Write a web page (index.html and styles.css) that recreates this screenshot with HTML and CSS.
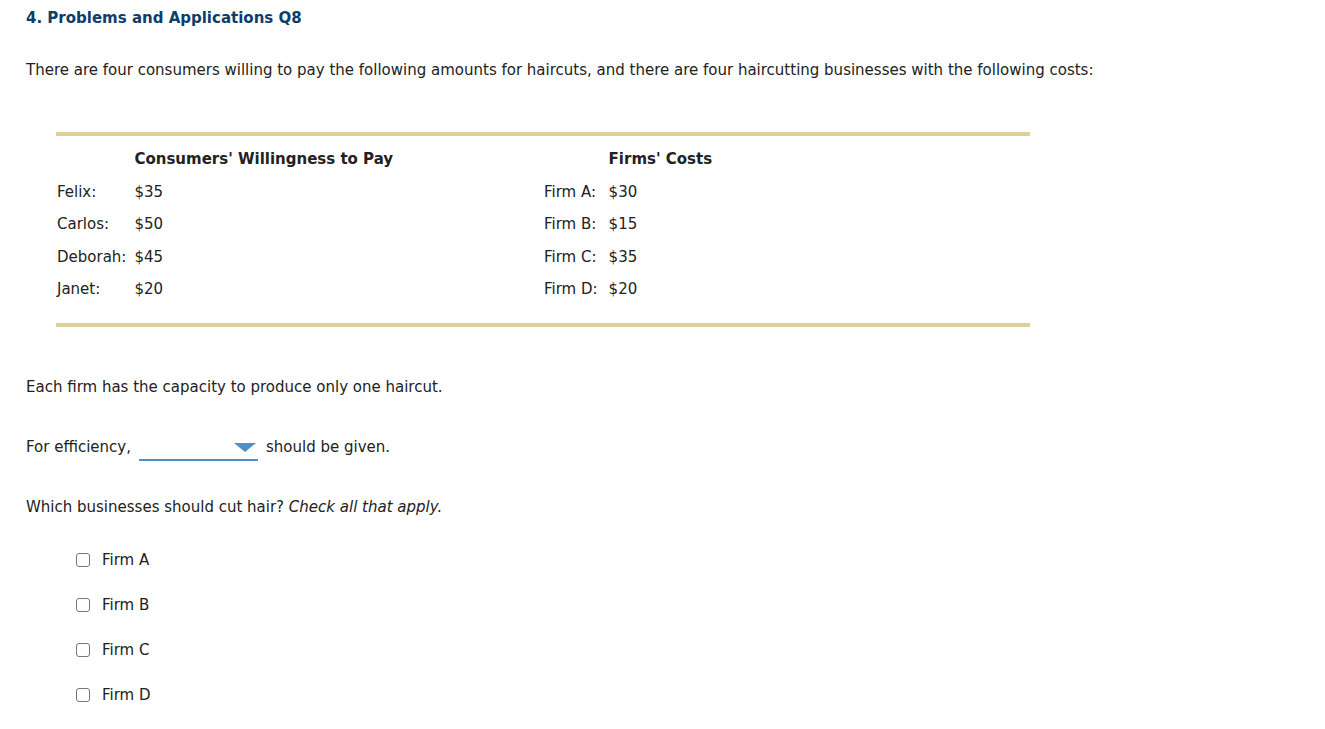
FILE: index.html
```html
<!DOCTYPE html>
<html lang="en">
  <head>
    <meta charset="UTF-8" />
    <title>Problems and Applications Q8</title>
    <link rel="stylesheet" href="styles.css">
  </head>
  <body>
    <div class="question">
      <h1>4. Problems and Applications Q8</h1>

      <p class="intro">
        There are four consumers willing to pay the following amounts for haircuts, and there are four haircutting businesses with the following costs:
      </p>

      <div class="data-table">
        <div class="half">
          <span></span><span class="head">Consumers' Willingness to Pay</span>
          <span>Felix:</span><span>$35</span>
          <span>Carlos:</span><span>$50</span>
          <span>Deborah:</span><span>$45</span>
          <span>Janet:</span><span>$20</span>
        </div>
        <div class="half">
          <span></span><span class="head">Firms' Costs</span>
          <span>Firm A:</span><span>$30</span>
          <span>Firm B:</span><span>$15</span>
          <span>Firm C:</span><span>$35</span>
          <span>Firm D:</span><span>$20</span>
        </div>
      </div>

      <p class="capacity">Each firm has the capacity to produce only one haircut.</p>

      <p class="efficiency">
        For efficiency,
        <span class="dropdown"><span class="arrow"></span></span>
        should be given.
      </p>

      <p class="which">Which businesses should cut hair? <em>Check all that apply.</em></p>

      <ul class="choices">
        <li><label><input type="checkbox" /> Firm A</label></li>
        <li><label><input type="checkbox" /> Firm B</label></li>
        <li><label><input type="checkbox" /> Firm C</label></li>
        <li><label><input type="checkbox" /> Firm D</label></li>
      </ul>
    </div>
  </body>
</html>
```

FILE: styles.css
```css
/* General Styles */
body {
  font-family: Verdana, "DejaVu Sans", sans-serif;
  font-size: 15px;
  color: #222;
  background: #fff;
  margin: 0;
  padding: 0;
}
.question {
  padding: 9px 26px;
}
h1 {
  font-size: 15px;
  font-weight: bold;
  color: #0c3d6b;
  margin: 0;
  line-height: 18px;
}
p {
  margin: 0;
  line-height: 18px;
}
.intro {
  margin-top: 34px;
}

/* Data table */
.data-table {
  display: grid;
  grid-template-columns: 1fr 1fr;
  width: 974px;
  margin: 53px 0 0 30px;
  border-top: 4px solid #dbcf9f;
  border-bottom: 4px solid #dbcf9f;
  padding: 14px 0 25px;
}
.half {
  display: grid;
  grid-template-columns: auto 1fr;
  column-gap: 8px;
  row-gap: 14.5px;
  align-content: start;
  line-height: 18px;
}
.half span:nth-child(odd) {
  padding-left: 1px;
}
.half + .half {
  column-gap: 11px;
}
.head {
  font-weight: bold;
}

.capacity {
  margin-top: 51px;
}
.efficiency {
  margin-top: 42px;
  display: flex;
  align-items: center;
  gap: 8px;
}
.dropdown {
  display: inline-block;
  position: relative;
  width: 119px;
  height: 20px;
  border-bottom: 2px solid #4f8fc9;
  margin: 0 0 -6px 0;
}
.arrow {
  position: absolute;
  right: 2px;
  top: 4px;
  width: 0;
  height: 0;
  border-left: 11px solid transparent;
  border-right: 11px solid transparent;
  border-top: 9px solid #4f8fc9;
}
.which {
  margin-top: 42px;
}

/* Choices */
.choices {
  list-style: none;
  margin: 35px 0 0 50px;
  padding: 0;
}
.choices li {
  line-height: 18px;
  margin-bottom: 27px;
}
.choices label {
  display: flex;
  align-items: center;
  gap: 12px;
}
.choices input {
  appearance: none;
  width: 14px;
  height: 14px;
  margin: 0;
  border: 1px solid #777;
  border-radius: 3px;
  background: #fff;
}
```
